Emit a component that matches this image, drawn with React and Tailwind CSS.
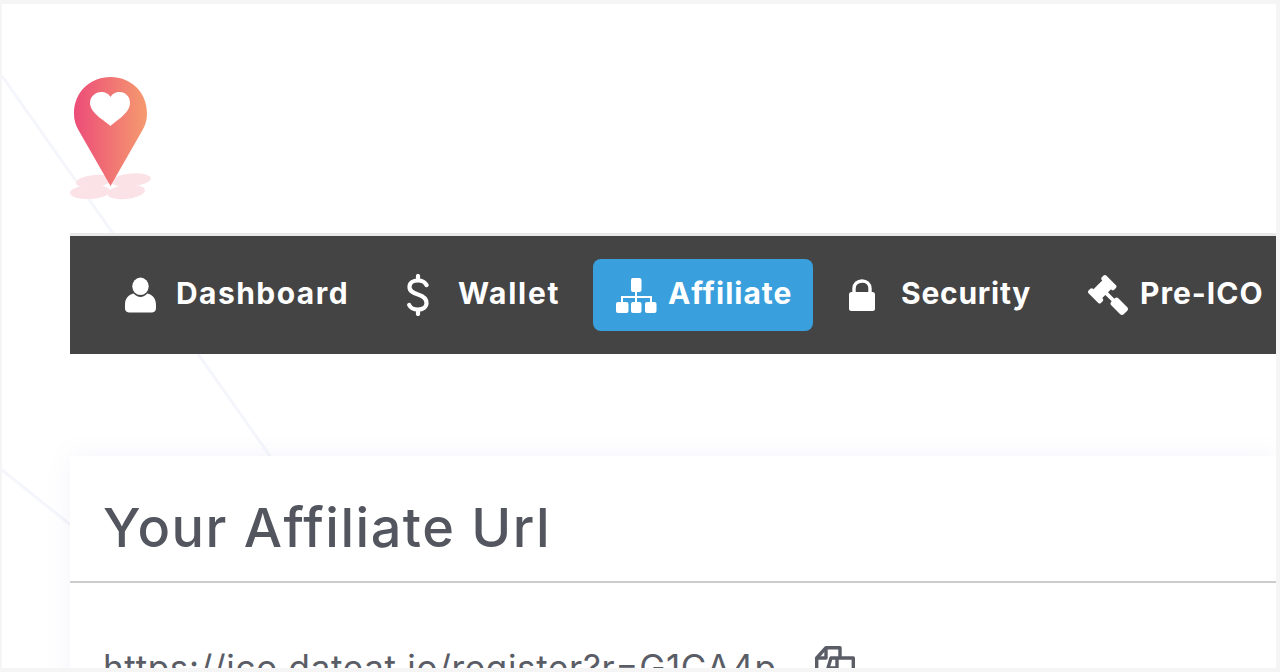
import React from 'react';
import { FaGavel } from 'react-icons/fa';

const fontSans = "font-['Inter','Liberation_Sans',sans-serif]";

function Logo() {
  return (
    <svg width="84" height="126" viewBox="0 0 84 126" className="block">
      <defs>
        <linearGradient id="pin" x1="0" x2="1" y1="0" y2="0">
          <stop offset="0" stopColor="#ec4c78" />
          <stop offset="1" stopColor="#f59b6f" />
        </linearGradient>
      </defs>
      {/* reflection under the pin */}
      <g fill="#fbe2e6">
        <ellipse cx="26" cy="105" rx="18" ry="6" transform="rotate(-6 26 105)" />
        <ellipse cx="63" cy="104" rx="20" ry="6.5" transform="rotate(-5 63 104)" />
        <ellipse cx="22" cy="116" rx="20" ry="7" transform="rotate(-3 22 116)" />
        <ellipse cx="58" cy="116" rx="19" ry="7" transform="rotate(-6 58 116)" />
      </g>
      <path
        d="M42.5 110 L11 55 C7.5 49 6 44 6 37.5 C6 16 22 1 42.5 1 C63 1 79 16 79 37.5 C79 44 77.5 49 74 55 Z"
        fill="url(#pin)"
      />
      <path
        d="M42.5 50 C36 44 22 37 22 27 C22 20 28 16 33 16 C37.5 16 41 18 42.5 21 C44 18 47.5 16 52 16 C57 16 62 20 62 27 C62 37 49 44 42.5 50 Z"
        fill="#fff"
      />
    </svg>
  );
}

function UserIcon() {
  return (
    <svg width="32" height="36" viewBox="0 0 32 36" fill="#fff" className="block">
      <ellipse cx="16" cy="9" rx="8.5" ry="9" />
      <path d="M0 28 C0 21 4 17.5 9 16.5 C11 19 13.5 20 16 20 C18.5 20 21 19 23 16.5 C28 17.5 32 21 32 28 L32 32 C32 34.5 30.5 36 28 36 L4 36 C1.5 36 0 34.5 0 32 Z" />
    </svg>
  );
}

function DollarIcon() {
  return (
    <svg width="22" height="42" viewBox="0 0 22 42" fill="none" stroke="#fff" strokeWidth="4.2" strokeLinecap="round" className="block">
      <path d="M19.5 11 C18 8 15 6.5 11 6.5 C6 6.5 2.5 9 2.5 13 C2.5 17.5 6.5 19 11 20.5 C16 22 19.5 24 19.5 29 C19.5 33 16 35.5 11 35.5 C7 35.5 3.5 34 2.2 31" />
      <path d="M11 2 V6 M11 36 V40" />
    </svg>
  );
}

function SitemapIcon() {
  return (
    <svg width="42" height="35" viewBox="0 0 42 35" className="block">
      <g fill="#fff">
        <rect x="16" y="0" width="10.5" height="14" rx="2" />
        <rect x="1" y="24" width="12.5" height="11" rx="2" />
        <rect x="16" y="24" width="10.5" height="11" rx="2" />
        <rect x="30" y="24" width="11.5" height="11" rx="2" />
      </g>
      <path d="M21 14 V24 M7 24 V19 H36 V24" fill="none" stroke="#fff" strokeWidth="2" />
    </svg>
  );
}

function LockIcon() {
  return (
    <svg width="26" height="32" viewBox="0 0 26 32" className="block">
      <path d="M5 15 V9.5 C5 5 8.5 2 13 2 C17.5 2 21 5 21 9.5 V15" fill="none" stroke="#fff" strokeWidth="3.4" />
      <rect x="0" y="13" width="26" height="19" rx="2.5" fill="#fff" />
    </svg>
  );
}

function CopyIcon() {
  return (
    <svg width="40" height="40" viewBox="0 0 40 40" fill="none" stroke="#5a5d66" strokeWidth="3.4" strokeLinejoin="round" className="block">
      <path d="M1.7 31 V12 L11 1.7 H25 V12" />
      <path d="M11 1.7 V12 H1.7" />
      <path d="M16 12 H38.3 V39 H13 V22 Z" />
      <path d="M22 12 V22 H13" />
    </svg>
  );
}

const navItems = [
  { label: 'Dashboard', icon: <UserIcon />, className: 'w-[279px] pl-[55px]', gap: 'gap-5', text: 'tracking-[1.45px]' },
  { label: 'Wallet', icon: <DollarIcon />, className: 'w-[244px] pl-[58px]', gap: 'gap-[29px]', text: 'tracking-[1.7px]' },
  { label: 'Affiliate', icon: <SitemapIcon />, className: 'w-[220px] pl-[22px] bg-[#3a9fdd] rounded-lg', gap: 'gap-[11px]', text: 'tracking-[1px]' },
  { label: 'Security', icon: <LockIcon />, className: 'w-[275px] pl-[36px]', gap: 'gap-[26px]', text: 'tracking-[0.75px]' },
  { label: 'Pre-ICO', icon: <FaGavel size={40} className="-scale-x-100" />, className: 'pl-0', gap: 'gap-[12px]', text: 'tracking-[1px]' },
];

export default function App() {
  return (
    <div className={`w-[1280px] h-[672px] overflow-hidden bg-[#f5f5f5] pt-1 pl-0.5 pr-1 pb-1 ${fontSans}`}>
      <div className="relative h-full overflow-hidden bg-white pl-[68px]">
        {/* faint background lines */}
        <svg className="absolute left-0 top-0" width="1274" height="664" fill="none" stroke="#f5f6fb" strokeWidth="3">
          <path d="M0 72 L268 452" />
          <path d="M0 466 L70 522" />
        </svg>

        <div className="relative h-[229px] pt-[72px] -ml-0.5">
          <Logo />
        </div>

        <nav className="relative border-t-[3px] border-[#e9e9e9]">
          <ul className="flex h-[118px] items-center bg-[#444444] text-[30px] font-bold leading-none text-white whitespace-nowrap">
            {navItems.map((item) => (
              <li key={item.label} className={`flex h-[72px] shrink-0 items-center ${item.gap} ${item.className}`}>
                {item.icon}
                <span className={`pb-1 ${item.text}`}>{item.label}</span>
              </li>
            ))}
          </ul>
        </nav>

        <section className="relative mt-[102px] h-[400px] bg-white shadow-[0_0_24px_rgba(130,130,210,0.09)]">
          <header className="flex h-[127px] items-start border-b-2 border-[#cccccc] pl-[33px] pt-[45px]">
            <h2 className="text-[54px] font-medium leading-none tracking-[1.5px] text-[#53565f]">Your Affiliate Url</h2>
          </header>
          <div className="flex items-start pl-[33px] pt-[62px]">
            <span className="text-[35px] leading-[44px] tracking-[0.67px] text-[#5a5d66]">https://ico.dateat.io/register?r=G1CA4p</span>
            <span className="ml-[38px] mt-px"><CopyIcon /></span>
          </div>
        </section>
      </div>
    </div>
  );
}
